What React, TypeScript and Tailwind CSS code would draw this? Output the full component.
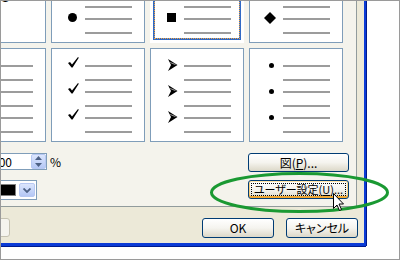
import React from 'react';

const LINE = 'h-[2px] w-[47px] bg-[#9c9c9c]';

const BulletCell = ({ bullet, selected = false }: { bullet?: React.ReactNode; selected?: boolean }) => (
  <div
    className={`relative flex h-[94px] flex-col border bg-white pt-[11px] ${
      selected ? 'border-white' : 'border-[#7f9db9]'
    }`}
  >
    {[0, 1, 2].map((i) => (
      <div key={i} className={i ? 'mt-[5px]' : ''}>
        <div className="flex h-[12px]">
          <div className="w-[33px] shrink-0">{bullet}</div>
          <div className={`mt-[5px] ${LINE}`} />
        </div>
        <div className={`ml-[33px] mt-[7px] ${LINE}`} />
      </div>
    ))}
    {selected && (
      <div className="absolute inset-[2px] border-2 border-[#316ac5]">
        <div className="absolute inset-[-1px] border border-dotted border-[#f0a545]" />
      </div>
    )}
  </div>
);

const circle = <div className="ml-[16px] h-[9px] w-[9px] rounded-full bg-black" />;
const square = <div className="ml-[16px] h-[9px] w-[9px] bg-black" />;
const diamond = (
  <svg className="-mt-[1px] ml-[14px]" width="12" height="12" viewBox="0 0 12 12">
    <polygon points="6,0 12,6 6,12 0,6" fill="#000" />
  </svg>
);
const check = (
  <svg className="-mt-[3px] ml-[16px]" width="11" height="11" viewBox="0 0 11 11">
    <path d="M0 6 L2 5 L4 7.5 L10 0 L10.8 0.7 L4.6 10.5 L3.5 10.5 Z" fill="#000" />
  </svg>
);
const arrow = (
  <svg className="-mt-[1px] ml-[17px]" width="10" height="12" viewBox="0 0 10 12">
    <path d="M0 0 L9.5 6 L0 12 L3 6 Z" fill="#000" />
    <path d="M2.2 3.5 L7.5 5.6" stroke="#fff" strokeWidth="0.6" />
  </svg>
);
const dot = <div className="ml-[19px] mt-[3px] h-[5px] w-[5px] rounded-full bg-black" />;

const XpButton = ({
  className,
  hot = false,
  children,
}: {
  className: string;
  hot?: boolean;
  children: React.ReactNode;
}) => (
  <div
    className={`relative flex items-center justify-center rounded-[3px] border border-[#003c74] bg-linear-to-b from-white via-[#f5f4ef] to-[#dcd8c8] leading-none text-black [font-feature-settings:'palt'] ${
      hot ? 'shadow-[inset_0_-2px_0_#f1a834,inset_0_1px_0_#fde3a6,inset_1px_0_0_#f9cf7e,inset_-1px_0_0_#f9cf7e]' : ''
    } ${className}`}
  >
    {children}
    {hot && <div className="absolute inset-[2px] border border-dotted border-black" />}
  </div>
);

const ArrowBox = ({ children }: { children: React.ReactNode }) => (
  <div className="flex flex-col items-center justify-center rounded-[2px] border border-[#b7c8f2] bg-linear-to-b from-[#dce6fd] to-[#b4c7f5]">
    {children}
  </div>
);

export default function App() {
  return (
    <div className="relative h-[260px] w-[400px] overflow-hidden border border-[#9a9a9a] bg-white font-['Noto_Sans_CJK_JP',sans-serif] text-black">
      <div className="flex h-[245px] w-[365px] flex-col border-b-[3px] border-r-[2px] border-[#0b3bd6] bg-[#ece9d8] shadow-[1px_0_0_#001a8c,0_1px_0_#001a8c]">
        {/* tab page */}
        <div className="flex h-[206px] w-[356px] shrink-0 flex-col overflow-hidden border-b border-r border-[#919b9c] bg-[#f4f3ec]">
          <div className="-ml-[49px] -mt-[52px] grid grid-cols-[repeat(4,94px)] gap-[5px]">
            <div className="flex h-[94px] items-center justify-center border border-[#7f9db9] bg-white text-[12px]">
              なし
            </div>
            <BulletCell bullet={circle} />
            <BulletCell bullet={square} selected />
            <BulletCell bullet={diamond} />
            <BulletCell />
            <BulletCell bullet={check} />
            <BulletCell bullet={arrow} />
            <BulletCell bullet={dot} />
          </div>

          <div className="flex justify-between pt-[11px]">
            <div className="-ml-[7px] flex flex-col gap-[10px]">
              <div className="flex items-center">
                <div className="flex h-[17px] w-[53px] items-center border border-[#7f9db9] bg-white">
                  <span className="-ml-[3px] flex-1 text-[12px] leading-none">100</span>
                  <div className="flex h-[15px] w-[15px]">
                    <ArrowBox>
                      <div className="flex h-[15px] w-[13px] flex-col items-center justify-center gap-[3px]">
                        <svg width="7" height="4" viewBox="0 0 7 4">
                          <path d="M0 4 L3.5 0 L7 4 Z" fill="#4d6185" />
                        </svg>
                        <svg width="7" height="4" viewBox="0 0 7 4">
                          <path d="M0 0 L3.5 4 L7 0 Z" fill="#4d6185" />
                        </svg>
                      </div>
                    </ArrowBox>
                  </div>
                </div>
                <span className="ml-[3px] text-[12px] leading-none">%</span>
              </div>
              <div className="flex h-[20px] w-[43px] items-center justify-end gap-[3px] border border-[#7f9db9] bg-white pr-[1px]">
                <div className="h-[12px] w-[22px] border border-[#808080] bg-black" />
                <div className="flex h-[14px] w-[16px]">
                  <ArrowBox>
                    <div className="flex h-[12px] w-[14px] items-center justify-center">
                      <svg width="8" height="5" viewBox="0 0 8 5">
                        <path d="M0.5 0.5 L4 4 L7.5 0.5" stroke="#4d6185" strokeWidth="1.8" fill="none" />
                      </svg>
                    </div>
                  </ArrowBox>
                </div>
              </div>
            </div>

            <div className="mr-[7px] flex flex-col gap-[8px]">
              <XpButton className="h-[19px] w-[101px] text-[12px]">
                図(<span className="underline">P</span>)...
              </XpButton>
              <XpButton className="h-[19px] w-[101px] text-[11px]" hot>
                ユーザー設定(<span className="underline">U</span>)...
              </XpButton>
            </div>
          </div>
        </div>

        {/* dialog buttons */}
        <div className="flex justify-between pr-[6px] pt-[11px]">
          <div className="-ml-[63px] h-[19px] w-[72px] rounded-[3px] border border-[#c5c2b2] bg-[#f5f4ee]" />
          <div className="flex gap-[12px]">
            <XpButton className="h-[20px] w-[72px] text-[12px]">OK</XpButton>
            <XpButton className="h-[20px] w-[72px] text-[12px]">キャンセル</XpButton>
          </div>
        </div>
      </div>

      {/* annotation + pointer */}
      <svg className="pointer-events-none absolute left-[-1px] top-[-1px]" width="400" height="260" viewBox="0 0 400 260">
        <ellipse cx="299.5" cy="192.5" rx="88" ry="19" fill="none" stroke="#1a9932" strokeWidth="3" />
        <path
          d="M333.5 193.5 V208.5 L337 205 L339.5 210.5 L341.5 209.5 L339 204 H343.5 Z"
          fill="#fff"
          stroke="#000"
          strokeWidth="1"
          strokeLinejoin="miter"
        />
      </svg>
    </div>
  );
}
